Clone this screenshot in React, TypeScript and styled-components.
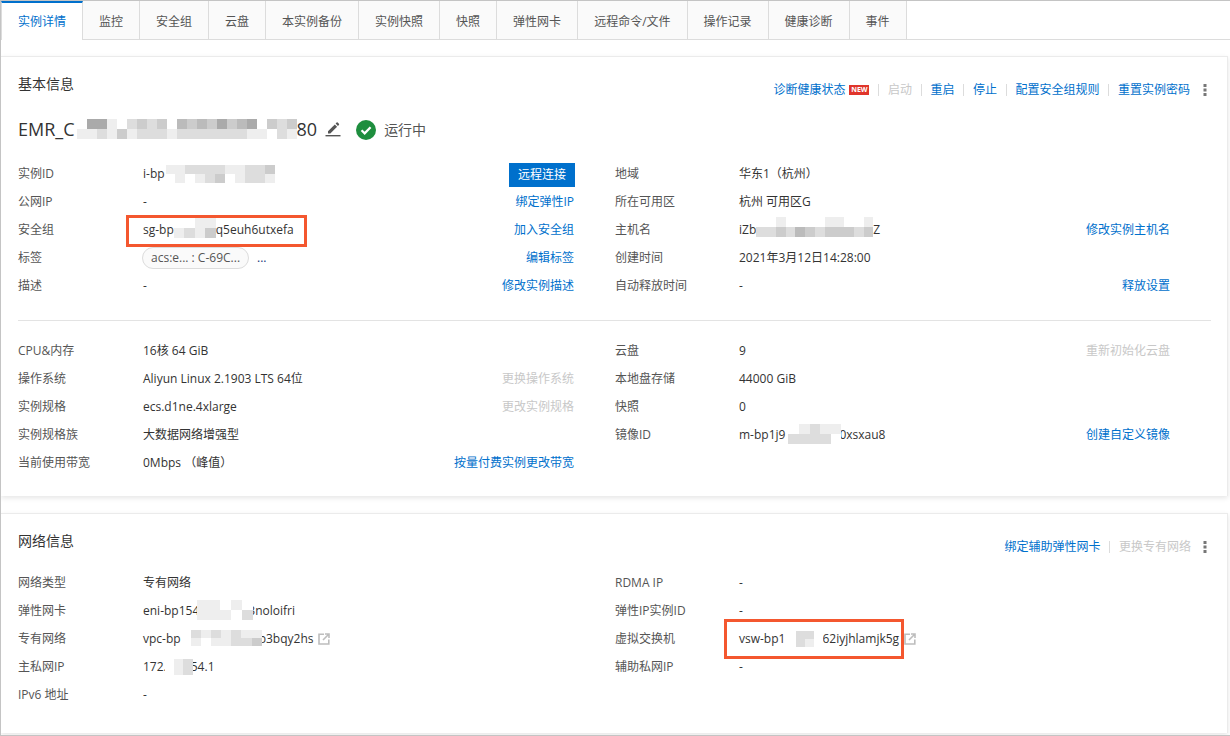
import styled, { createGlobalStyle } from 'styled-components';
import type { ReactNode } from 'react';

const Global = createGlobalStyle`
  html, body { margin: 0; padding: 0; background: #fff; }
  body { font-family: "Open Sans", "Noto Sans CJK SC", sans-serif; font-size: 12px; line-height: 20px; color: #333; }
`;

const Page = styled.div`
  width: 1230px;
  height: 736px;
  box-sizing: border-box;
  border-top: 1px solid #c4c4c4;
  border-left: 1px solid #c4c4c4;
  border-bottom: 1px solid #c4c4c4;
  overflow: hidden;
  background: #fff;
`;
const TabBar = styled.div`
  display: flex;
  height: 38px;
  border-bottom: 1px solid #dcdcdc;
`;
const Tab = styled.div<{ $active?: boolean }>`
  display: flex;
  align-items: center;
  box-sizing: border-box;
  padding: ${(p) => (p.$active ? '0 16px' : '3px 16px 0')};
  height: ${(p) => (p.$active ? 39 : 38)}px;
  border-right: 1px solid #dcdcdc;
  background: ${(p) => (p.$active ? '#fff' : '#fafafa')};
  color: ${(p) => (p.$active ? '#0070cc' : '#555')};
  ${(p) => p.$active && 'border-top: 2px solid #0070cc; border-left: 1px solid #dcdcdc;'}
`;
const Section = styled.section<{ $second?: boolean }>`
  width: 1227px;
  box-sizing: border-box;
  margin-top: ${(p) => (p.$second ? 17 : 16)}px;
  padding: ${(p) => (p.$second ? '17px 0 25px 17px' : '17px 0 20px 17px')};
  border-top: 1px solid #ebebeb;
  border-right: 1px solid #ebebeb;
  box-shadow: 0 2px 5px rgba(0, 0, 0, 0.1);
`;
const HeaderRow = styled.div`
  display: flex;
  justify-content: space-between;
  align-items: flex-start;
  padding-right: 20px;
`;
const Title = styled.h3`
  margin: 0;
  font-size: 14px;
  font-weight: 400;
  line-height: 20px;
  color: #333;
`;
const Actions = styled.div`
  display: flex;
  align-items: center;
  height: 20px;
  margin-top: 6px;
`;
const ActionLink = styled.a<{ $disabled?: boolean }>`
  color: ${(p) => (p.$disabled ? '#c8c8c8' : '#0070cc')};
`;
const Sep = styled.span`
  width: 1px;
  height: 12px;
  margin: 0 8.5px 0 9px;
  background: #dcdcdc;
`;
const NewBadge = styled.span`
  display: inline-flex;
  align-items: center;
  justify-content: center;
  width: 20px;
  height: 10px;
  margin-left: 4px;
  background: #e0352b;
  color: #fff;
  font-size: 7px;
  font-weight: 700;
  line-height: 10px;
`;
const DotsWrap = styled.span<{ $gap: number }>`
  display: flex;
  margin-left: ${(p) => p.$gap}px;
  color: #777;
`;
const NameRow = styled.div`
  display: flex;
  align-items: center;
  height: 28px;
  margin-top: 15px;
`;
const Name = styled.span`
  display: inline-flex;
  align-items: center;
  font-size: 18px;
  color: #333;
`;
const EditIcon = styled.svg`
  width: 16px;
  height: 16px;
  margin-left: 8px;
  color: #555;
`;
const StatusIcon = styled.svg`
  width: 20px;
  height: 20px;
  margin: 2px 0 0 15px;
`;
const StatusText = styled.span`
  margin-left: 8px;
  padding-top: 2px;
  font-size: 14px;
  color: #555;
`;
const Info = styled.div<{ $top: number }>`
  display: grid;
  grid-template-columns: 556px 555px;
  column-gap: 41px;
  margin-top: ${(p) => p.$top}px;
`;
const Col = styled.div``;
const Row = styled.div<{ $label: number }>`
  display: grid;
  grid-template-columns: ${(p) => p.$label}px 1fr auto;
  align-items: center;
  box-sizing: border-box;
  height: 28px;
  padding-top: 2px;
`;
const Label = styled.span`
  color: #555;
`;
const Value = styled.span`
  position: relative;
  display: inline-flex;
  align-items: center;
  height: 20px;
  color: #333;
  white-space: pre;
`;
const RowAction = styled.a<{ $disabled?: boolean }>`
  color: ${(p) => (p.$disabled ? '#c8c8c8' : '#0070cc')};
`;
const ConnectButton = styled.button`
  width: 66px;
  height: 24px;
  align-self: end;
  margin-right: -1px;
  padding: 0;
  border: none;
  background: #0070cc;
  color: #fff;
  font: inherit;
`;
const Divider = styled.div`
  height: 1px;
  width: 1193px;
  margin: 21px 0 15px;
  background: #e3e3e3;
`;
const Tag = styled.span`
  display: inline-flex;
  align-items: center;
  box-sizing: border-box;
  width: 107px;
  height: 22px;
  padding-left: 8px;
  margin-left: -1px;
  border: 1px solid #dcdcdc;
  border-radius: 11px;
  background: #fafafa;
  color: #555;
`;
const More = styled.span`
  margin-left: 8px;
  color: #223a7a;
`;
const Highlight = styled.span<{ $left: number; $top: number; $w: number; $h: number }>`
  position: absolute;
  z-index: 1;
  left: ${(p) => p.$left}px;
  top: ${(p) => p.$top}px;
  width: ${(p) => p.$w}px;
  height: ${(p) => p.$h}px;
  box-sizing: border-box;
  border: 3px solid #f4572f;
`;
const MosaicGrid = styled.span<{ $w: number; $h: number; $cols: number; $gapL: number; $over: number; $lift: number }>`
  position: relative;
  top: ${(p) => -p.$lift}px;
  display: inline-grid;
  flex: none;
  grid-template-columns: repeat(${(p) => p.$cols}, 1fr);
  grid-auto-rows: 1fr;
  width: ${(p) => p.$w}px;
  height: ${(p) => p.$h}px;
  margin-left: ${(p) => p.$gapL}px;
  margin-right: ${(p) => -p.$over}px;
`;
const MosaicCell = styled.i<{ $tone: string }>`
  background: #${(p) => p.$tone.repeat(3)};
`;
const LinkIcon = styled.svg`
  width: 12px;
  height: 12px;
  margin-left: 5px;
  color: #bdbdbd;
`;

type MosaicProps = { w: number; h?: number; rows: string[]; gap?: number; over?: number; lift?: number };

// each letter is a grey level for one blurred block
function Mosaic({ w, h = 20, rows, gap = 0, over = 0, lift = 0 }: MosaicProps) {
  const cells = rows.join('').split('');
  return (
    <MosaicGrid $w={w} $h={h} $cols={rows[0].length} $gapL={gap} $over={over} $lift={lift}>
      {cells.map((c, i) => (
        <MosaicCell key={i} $tone={c} />
      ))}
    </MosaicGrid>
  );
}

function Dots({ gap = 13 }: { gap?: number }) {
  return (
    <DotsWrap $gap={gap}>
      <svg width="4" height="12" viewBox="0 0 4 12" fill="currentColor">
        <rect x="0.5" y="0" width="3" height="3" />
        <rect x="0.5" y="4.5" width="3" height="3" />
        <rect x="0.5" y="9" width="3" height="3" />
      </svg>
    </DotsWrap>
  );
}

function ExternalLink() {
  return (
    <LinkIcon viewBox="0 0 12 12" fill="none" stroke="currentColor" strokeWidth="1.6">
      <path d="M6 1.2H1v9.8h9.8V6.5" />
      <path d="M5 7l5.2-5.2M7 1h4v4" />
    </LinkIcon>
  );
}

type Item = { label: string; value: ReactNode; action?: ReactNode };

function Column({ items, label }: { items: Item[]; label: number }) {
  return (
    <Col>
      {items.map((it) => (
        <Row key={it.label} $label={label}>
          <Label>{it.label}</Label>
          <Value>{it.value}</Value>
          {it.action ?? <span />}
        </Row>
      ))}
    </Col>
  );
}

const tabs = ['监控', '安全组', '云盘', '本实例备份', '实例快照', '快照', '弹性网卡', '远程命令/文件', '操作记录', '健康诊断', '事件'];

const basicLeft: Item[] = [
  {
    label: '实例ID',
    value: <>i-bp<Mosaic w={109} h={18} rows={['eeddddeeddc', 'fefedcfedde']} gap={1} /></>,
    action: <ConnectButton>远程连接</ConnectButton>,
  },
  { label: '公网IP', value: '-', action: <RowAction>绑定弹性IP</RowAction> },
  {
    label: '安全组',
    value: (
      <>
        sg-bp<Mosaic w={42} rows={['ffee', 'edec']} lift={2} />q5euh6utxefa
        <Highlight $left={-17} $top={-5} $w={181} $h={32} />
      </>
    ),
    action: <RowAction>加入安全组</RowAction>,
  },
  {
    label: '标签',
    value: <><Tag>acs:e... : C-69C...</Tag><More>...</More></>,
    action: <RowAction>编辑标签</RowAction>,
  },
  { label: '描述', value: '-', action: <RowAction>修改实例描述</RowAction> },
];

const basicRight: Item[] = [
  { label: '地域', value: '华东1（杭州）' },
  { label: '所在可用区', value: '杭州 可用区G' },
  {
    label: '主机名',
    value: <>iZb<Mosaic w={117} rows={['ffeffffeeffe', 'ddcdbcdcccdc']} lift={3} />Z</>,
    action: <RowAction>修改实例主机名</RowAction>,
  },
  { label: '创建时间', value: '2021年3月12日14:28:00' },
  { label: '自动释放时间', value: '-', action: <RowAction>释放设置</RowAction> },
];

const specLeft: Item[] = [
  { label: 'CPU&内存', value: '16核 64 GiB' },
  { label: '操作系统', value: 'Aliyun Linux 2.1903 LTS 64位', action: <RowAction $disabled>更换操作系统</RowAction> },
  { label: '实例规格', value: 'ecs.d1ne.4xlarge', action: <RowAction $disabled>更改实例规格</RowAction> },
  { label: '实例规格族', value: '大数据网络增强型' },
  { label: '当前使用带宽', value: '0Mbps （峰值）', action: <RowAction>按量付费实例更改带宽</RowAction> },
];

const specRight: Item[] = [
  { label: '云盘', value: '9', action: <RowAction $disabled>重新初始化云盘</RowAction> },
  { label: '本地盘存储', value: '44000 GiB' },
  { label: '快照', value: '0' },
  {
    label: '镜像ID',
    value: <>m-bp1j9<Mosaic w={53} rows={['fedee', 'ddddf']} gap={3} over={2} lift={1} />0xsxau8</>,
    action: <RowAction>创建自定义镜像</RowAction>,
  },
];

const netLeft: Item[] = [
  { label: '网络类型', value: '专有网络' },
  { label: '弹性网卡', value: <>eni-bp154<Mosaic w={56} rows={['eefef', 'eeefd']} gap={-2} over={5} lift={1} />3noloifri</> },
  {
    label: '专有网络',
    value: <>vpc-bp<Mosaic w={81} h={16} rows={['fdededee', 'fefeeddc']} over={3} lift={1} />p3bqy2hs<ExternalLink /></>,
  },
  { label: '主私网IP', value: <>172.<Mosaic w={28} h={16} rows={['fed', 'fed']} gap={-2} over={2} />54.1</> },
  { label: 'IPv6 地址', value: '-' },
];

const netRight: Item[] = [
  { label: 'RDMA IP', value: '-' },
  { label: '弹性IP实例ID', value: '-' },
  {
    label: '虚拟交换机',
    value: (
      <>
        vsw-bp1<Mosaic w={37} h={16} rows={['fddf', 'fdef']} gap={1} over={1} />62iyjhlamjk5g<ExternalLink />
        <Highlight $left={-15} $top={-10} $w={180} $h={40} />
      </>
    ),
  },
  { label: '辅助私网IP', value: '-' },
];

function App() {
  return (
    <>
      <Global />
      <Page>
        <TabBar>
          <Tab $active>实例详情</Tab>
          {tabs.map((t) => (
            <Tab key={t}>{t}</Tab>
          ))}
        </TabBar>

        <Section>
          <HeaderRow>
            <Title>基本信息</Title>
            <Actions>
              <ActionLink>诊断健康状态</ActionLink>
              <NewBadge>NEW</NewBadge>
              <Sep />
              <ActionLink $disabled>启动</ActionLink>
              <Sep />
              <ActionLink>重启</ActionLink>
              <Sep />
              <ActionLink>停止</ActionLink>
              <Sep />
              <ActionLink>配置安全组规则</ActionLink>
              <Sep />
              <ActionLink>重置实例密码</ActionLink>
              <Dots />
            </Actions>
          </HeaderRow>
          <NameRow>
            <Name>
              EMR_C
              <Mosaic
                w={220}
                rows={['faaefdcdcfbcbcacbafcdc', 'eedecedddedddddddeefde']}
                gap={2}
              />
              80
            </Name>
            <EditIcon viewBox="0 0 16 16" fill="currentColor">
              <path d="M3 10.2 9.8 3.4l2.3 2.3-6.8 6.8H3z" />
              <path d="M10.6 2.6l1-1a.8.8 0 0 1 1.1 0l1.2 1.2a.8.8 0 0 1 0 1.1l-1 1z" />
              <rect x="0.5" y="14" width="15" height="1.4" />
            </EditIcon>
            <StatusIcon viewBox="0 0 21 21">
              <circle cx="10.5" cy="10.5" r="10.5" fill="#1e8e3e" />
              <path d="M5.8 10.8l3.3 3.2 6.2-6.4" fill="none" stroke="#fff" strokeWidth="2.4" />
            </StatusIcon>
            <StatusText>运行中</StatusText>
          </NameRow>
          <Info $top={16}>
            <Column items={basicLeft} label={125} />
            <Column items={basicRight} label={124} />
          </Info>
          <Divider />
          <Info $top={0}>
            <Column items={specLeft} label={125} />
            <Column items={specRight} label={124} />
          </Info>
        </Section>

        <Section $second>
          <HeaderRow>
            <Title>网络信息</Title>
            <Actions>
              <ActionLink>绑定辅助弹性网卡</ActionLink>
              <Sep />
              <ActionLink $disabled>更换专有网络</ActionLink>
              <Dots gap={12} />
            </Actions>
          </HeaderRow>
          <Info $top={11}>
            <Column items={netLeft} label={125} />
            <Column items={netRight} label={124} />
          </Info>
        </Section>
      </Page>
    </>
  );
}

export default App;
